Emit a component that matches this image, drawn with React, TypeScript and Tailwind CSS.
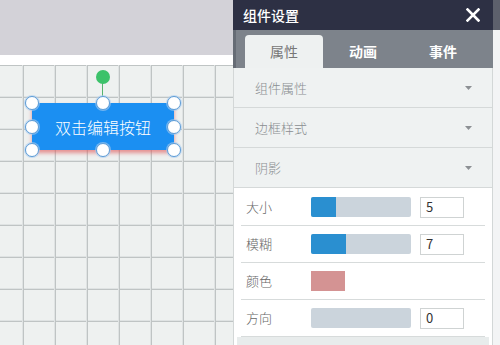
import React from 'react';

// ============================================================
// Data
// ============================================================

const SECTIONS = ['组件属性', '边框样式', '阴影'];

const TABS = [
  { label: '属性', active: true },
  { label: '动画', active: false },
  { label: '事件', active: false },
];

// 选中框的 8 个控制点（相对按钮左上角）
const HANDLES: [number, number][] = [
  [0, 0], [71, 0], [142, 0],
  [0, 24], [142, 24],
  [0, 47], [71, 47], [142, 47],
];

// ============================================================
// Pieces
// ============================================================

const Caret = () => (
  <svg width="7" height="4" viewBox="0 0 7 4" className="mr-[20px]">
    <path d="M0 0h7L3.5 4z" fill="#8c9094" />
  </svg>
);

const Slider = ({ percent }: { percent: number }) => (
  <div className="h-[20px] w-[100px] overflow-hidden rounded-[2px] bg-[#cbd4dc]">
    <div className="h-full bg-[#2a8fd0]" style={{ width: `${percent}%` }} />
  </div>
);

const NumberBox = ({ value }: { value: string }) => (
  <div className="ml-[9px] flex h-[21px] w-[44px] items-center border border-[#cfd3d3] bg-white pl-[5px] text-[13px] text-[#333]">
    {value}
  </div>
);

const Row = ({ label, children }: { label: string; children: React.ReactNode }) => (
  <div className="mx-[7px] flex h-[37px] items-center border-b border-[#d7dbdb]">
    <span className="w-[70px] pl-[5px] text-[13px] font-light text-[#666]">{label}</span>
    {children}
  </div>
);

// ============================================================
// Canvas
// ============================================================

const Canvas = () => (
  <div className="flex w-[233px] flex-col">
    <div className="h-[55px] bg-[#d3d2d8]" />
    <div className="h-[10px] bg-white" />
    <div className="relative flex-1 bg-[#eef1f0] bg-[linear-gradient(to_right,#dfe3e3_1px,#bfc4c4_1px,#bfc4c4_2px,transparent_2px),linear-gradient(to_bottom,#dfe3e3_1px,#bfc4c4_1px,#bfc4c4_2px,transparent_2px)] bg-[length:32px_32px] bg-[position:22px_-1px]">
      {/* 旋转柄 */}
      <div className="absolute left-[102px] top-[18px] h-[16px] w-px bg-[#56b36f]" />
      <div className="absolute left-[96px] top-[5px] h-[14px] w-[14px] rounded-full bg-[#3cc26a]" />

      {/* 按钮 */}
      <div className="absolute left-[32px] top-[38px] flex h-[47px] w-[142px] items-center justify-center bg-[#1b8ff2] text-[16px] font-light text-white shadow-[0_3px_4px_rgba(225,90,90,0.65)]">
        双击编辑按钮
      </div>

      {HANDLES.map(([x, y], i) => (
        <div
          key={i}
          className="absolute h-[14px] w-[14px] rounded-full border border-[#5b9bd5] bg-white shadow-[0_0_0_1px_rgba(170,205,240,0.6)]"
          style={{ left: 32 + x - 7, top: 38 + y - 7 }}
        />
      ))}
    </div>
  </div>
);

// ============================================================
// Settings panel
// ============================================================

const Panel = () => (
  <div className="flex w-[260px] flex-col">
    <div className="flex h-[30px] items-center justify-between bg-[#2d3044] pl-[10px] pr-[13px]">
      <span className="text-[14px] font-medium text-white">组件设置</span>
      <svg width="14" height="14" viewBox="0 0 14 14">
        <path d="M1.5 1.5l11 11M12.5 1.5l-11 11" stroke="#fff" strokeWidth="2.6" strokeLinecap="square" />
      </svg>
    </div>

    <div className="flex h-[38px] items-end border-l-[3px] border-[#666c75] bg-[#7d838b] pl-[9px]">
      {TABS.map((t) => (
        <div
          key={t.label}
          className={
            t.active
              ? 'flex h-[33px] w-[78px] items-center justify-center rounded-t-[4px] bg-[#eef1f1] text-[14px] text-[#777]'
              : 'flex h-[33px] w-[80px] items-center justify-center text-[14px] font-bold text-white'
          }
        >
          {t.label}
        </div>
      ))}
    </div>

    <div className="flex flex-1 flex-col border-x border-[#d3d7d7]">
      {SECTIONS.map((s) => (
        <div
          key={s}
          className="flex h-[40px] items-center justify-between border-b border-[#d5d9d9] bg-[#eff2f2] pl-[21px]"
        >
          <span className="text-[13px] font-light text-[#8a8e91]">{s}</span>
          <Caret />
        </div>
      ))}

      <div className="flex-1 bg-white pt-px">
        <Row label="大小">
          <Slider percent={25} />
          <NumberBox value="5" />
        </Row>
        <Row label="模糊">
          <Slider percent={35} />
          <NumberBox value="7" />
        </Row>
        <Row label="颜色">
          <div className="h-[20px] w-[34px] bg-[#d49393]" />
        </Row>
        <Row label="方向">
          <Slider percent={0} />
          <NumberBox value="0" />
        </Row>
        <div className="mx-[3px] h-[8px] bg-[#e8ecec]" />
      </div>
    </div>
  </div>
);

export default function App() {
  return (
    <div className="flex h-[345px] w-[500px] overflow-hidden bg-white font-['Noto_Sans_CJK_SC','Liberation_Sans',sans-serif]">
      <Canvas />
      <Panel />
      <div className="flex w-[7px] flex-col">
        <div className="h-[30px] bg-[#5d606c]" />
        <div className="flex-1 bg-[#f3f4f5]" />
      </div>
    </div>
  );
}
